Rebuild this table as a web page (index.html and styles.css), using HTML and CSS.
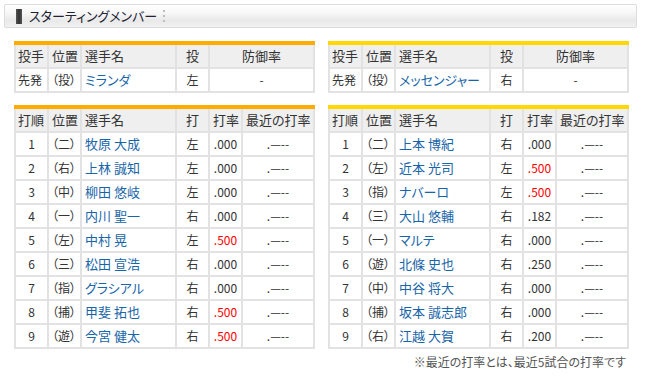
FILE: index.html
```html
<!DOCTYPE html>
<html lang="ja">
<head>
<meta charset="utf-8">
<link rel="stylesheet" href="styles.css">
</head>
<body>
<div class="page">
  <div class="title-bar">
    <span class="title-mark"></span>
    <h2 class="title">スターティングメンバー</h2>
    <span class="title-dots"><i></i><i></i><i></i></span>
  </div>

  <div class="teams">
    <div class="team">
      <table class="tbl orange">
        <colgroup><col class="c1"><col class="c2"><col class="c3"><col class="c4"><col class="c56"></colgroup>
        <tr><th class="l">投手</th><th class="l">位置</th><th class="l">選手名</th><th>投</th><th>防御率</th></tr>
        <tr><td class="l">先発</td><td class="l">（投）</td><td class="l name">ミランダ</td><td>左</td><td>-</td></tr>
      </table>
      <table class="tbl orange bat">
        <colgroup><col class="c1"><col class="c2"><col class="c3"><col class="c4"><col class="c5"><col class="c6"></colgroup>
        <tr><th class="l">打順</th><th class="l">位置</th><th class="l">選手名</th><th>打</th><th>打率</th><th>最近の打率</th></tr>
        <tr><td>1</td><td class="l">（二）</td><td class="l name">牧原 大成</td><td>左</td><td>.000</td><td>.—--</td></tr>
        <tr><td>2</td><td class="l">（右）</td><td class="l name">上林 誠知</td><td>左</td><td>.000</td><td>.—--</td></tr>
        <tr><td>3</td><td class="l">（中）</td><td class="l name">柳田 悠岐</td><td>左</td><td>.000</td><td>.—--</td></tr>
        <tr><td>4</td><td class="l">（一）</td><td class="l name">内川 聖一</td><td>右</td><td>.000</td><td>.—--</td></tr>
        <tr><td>5</td><td class="l">（左）</td><td class="l name">中村 晃</td><td>左</td><td class="red">.500</td><td>.—--</td></tr>
        <tr><td>6</td><td class="l">（三）</td><td class="l name">松田 宣浩</td><td>右</td><td>.000</td><td>.—--</td></tr>
        <tr><td>7</td><td class="l">（指）</td><td class="l name">グラシアル</td><td>右</td><td>.000</td><td>.—--</td></tr>
        <tr><td>8</td><td class="l">（捕）</td><td class="l name">甲斐 拓也</td><td>右</td><td class="red">.500</td><td>.—--</td></tr>
        <tr><td>9</td><td class="l">（遊）</td><td class="l name">今宮 健太</td><td>右</td><td class="red">.500</td><td>.—--</td></tr>
      </table>
    </div>

    <div class="team">
      <table class="tbl yellow">
        <colgroup><col class="c1"><col class="c2"><col class="c3"><col class="c4"><col class="c56"></colgroup>
        <tr><th class="l">投手</th><th class="l">位置</th><th class="l">選手名</th><th>投</th><th>防御率</th></tr>
        <tr><td class="l">先発</td><td class="l">（投）</td><td class="l name">メッセンジャー</td><td>右</td><td>-</td></tr>
      </table>
      <table class="tbl yellow bat">
        <colgroup><col class="c1"><col class="c2"><col class="c3"><col class="c4"><col class="c5"><col class="c6"></colgroup>
        <tr><th class="l">打順</th><th class="l">位置</th><th class="l">選手名</th><th>打</th><th>打率</th><th>最近の打率</th></tr>
        <tr><td>1</td><td class="l">（二）</td><td class="l name">上本 博紀</td><td>右</td><td>.000</td><td>.—--</td></tr>
        <tr><td>2</td><td class="l">（左）</td><td class="l name">近本 光司</td><td>左</td><td class="red">.500</td><td>.—--</td></tr>
        <tr><td>3</td><td class="l">（指）</td><td class="l name">ナバーロ</td><td>左</td><td class="red">.500</td><td>.—--</td></tr>
        <tr><td>4</td><td class="l">（三）</td><td class="l name">大山 悠輔</td><td>右</td><td>.182</td><td>.—--</td></tr>
        <tr><td>5</td><td class="l">（一）</td><td class="l name">マルテ</td><td>右</td><td>.000</td><td>.—--</td></tr>
        <tr><td>6</td><td class="l">（遊）</td><td class="l name">北條 史也</td><td>右</td><td>.250</td><td>.—--</td></tr>
        <tr><td>7</td><td class="l">（中）</td><td class="l name">中谷 将大</td><td>右</td><td>.000</td><td>.—--</td></tr>
        <tr><td>8</td><td class="l">（捕）</td><td class="l name">坂本 誠志郎</td><td>右</td><td>.000</td><td>.—--</td></tr>
        <tr><td>9</td><td class="l">（右）</td><td class="l name">江越 大賀</td><td>右</td><td>.200</td><td>.—--</td></tr>
      </table>
      <p class="note">※最近の打率とは、最近5試合の打率です</p>
    </div>
  </div>
</div>
</body>
</html>
```

FILE: styles.css
```css
html, body {
  margin: 0;
  padding: 0;
  background: #fff;
}
body {
  font-family: "Noto Sans CJK JP", "Noto Sans", sans-serif;
  font-size: 12px;
  color: #333;
}
.page {
  padding: 4px 9px 0 4px;
}
.title-bar {
  display: flex;
  align-items: center;
  height: 22px;
  border: 1px solid #dcdcdc;
  border-radius: 2px;
  background: linear-gradient(#ffffff 0%, #f7f7f7 35%, #e9e9e9 70%, #f1f1f1 100%);
  padding-left: 11px;
}
.title-mark {
  width: 6px;
  height: 15px;
  background: linear-gradient(90deg, #555 0%, #333 50%, #555 100%);
  margin-right: 7px;
}
.title {
  margin: 0;
  font-size: 13px;
  font-weight: normal;
  color: #222233;
  font-feature-settings: "palt";
  line-height: 22px;
}
.title-dots {
  display: flex;
  flex-direction: column;
  gap: 3px;
  margin-left: 6px;
}
.title-dots i {
  display: block;
  width: 2px;
  height: 2px;
  background: #bdbdbd;
}
.teams {
  display: flex;
  gap: 15px;
  padding: 13px 0 0 10px;
}
.team {
  width: 299px;
}
.tbl {
  width: 299px;
  table-layout: fixed;
  border-collapse: collapse;
  font-feature-settings: "palt";
}
.tbl + .tbl {
  margin-top: 12px;
}
.orange { border-top: 4px solid #ffab00; }
.yellow { border-top: 4px solid #ffd800; }
.c1, .c2, .c4, .c5 { width: 33px; }
.c3 { width: 95px; }
.c6 { width: 72px; }
.c56 { width: 105px; }
.tbl th, .tbl td {
  border: 2px solid #e2e2e2;
  height: 22px;
  padding: 0 3px;
  text-align: center;
  white-space: nowrap;
  overflow: hidden;
  font-weight: normal;
  line-height: 22px;
}
.tbl th {
  background: #efefef;
  color: #333;
  font-size: 13px;
}
.tbl .l {
  text-align: left;
}
.tbl th.l:first-child, .tbl td.l:first-child {
  padding-left: 2px;
}
.name {
  color: #1865a8;
  font-size: 13px;
}
.red {
  color: #f00;
}
.note {
  margin: 4px 1px 0 0;
  text-align: right;
  color: #555;
  font-size: 12px;
  font-feature-settings: "palt";
}
```
